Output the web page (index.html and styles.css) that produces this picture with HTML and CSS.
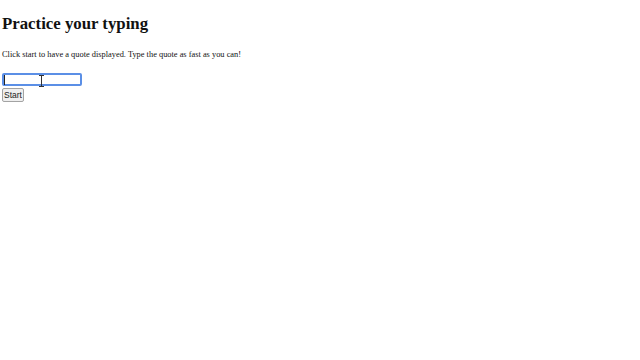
FILE: index.html
```html
<html>
  <head>
    <meta charset="UTF-8" />
    <title>Practice your typing</title>
    <link rel="stylesheet" href="styles.css">
  </head>
  <body>
    <h1>Practice your typing</h1>
    <p>Click start to have a quote displayed. Type the quote as fast as you can!</p>
    <p id="quote"></p>
    <div class="field">
      <input type="text" id="typed-value" class="typed" />
      <span class="caret"></span>
      <span class="ibeam"></span>
    </div>
    <button type="button" id="start" class="start">Start</button>
  </body>
</html>
```

FILE: styles.css
```css
body {
  margin: 0;
  padding: 0 2px;
  background: white;
  color: #111;
  font-family: "Liberation Serif", "Times New Roman", serif;
}
h1 {
  margin: 14px 0 0;
  font-size: 16.8px;
  line-height: 19px;
  font-weight: bold;
}
p {
  margin: 17px 0 13px;
  font-size: 8.4px;
  line-height: 10px;
}
#quote {
  margin: 0;
}

/** input */
.field {
  position: relative;
  width: 80px;
  height: 14px;
}
.typed {
  display: block;
  box-sizing: border-box;
  width: 80px;
  height: 13px;
  margin: 0;
  padding: 0;
  border: 2px solid #5b8fe6;
  border-radius: 2px;
  background: white;
  outline: none;
}
.caret {
  position: absolute;
  top: 2px;
  left: 2px;
  width: 1px;
  height: 10px;
  background: #222;
}
.ibeam {
  position: absolute;
  top: 2px;
  left: 39px;
  width: 1px;
  height: 12px;
  background: #333;
}
.ibeam::before,
.ibeam::after {
  content: "";
  position: absolute;
  left: -2px;
  width: 5px;
  height: 1px;
  background: #333;
}
.ibeam::before {
  top: 0;
}
.ibeam::after {
  bottom: 0;
}

.start {
  display: block;
  box-sizing: border-box;
  width: 22px;
  height: 14px;
  margin: 1px 0 0;
  padding: 0;
  border: 1px solid #a3a3a3;
  border-radius: 2px;
  background: #efefef;
  color: #222;
  font-family: "Liberation Sans", Arial, sans-serif;
  font-size: 8.5px;
  line-height: 12px;
}
```
